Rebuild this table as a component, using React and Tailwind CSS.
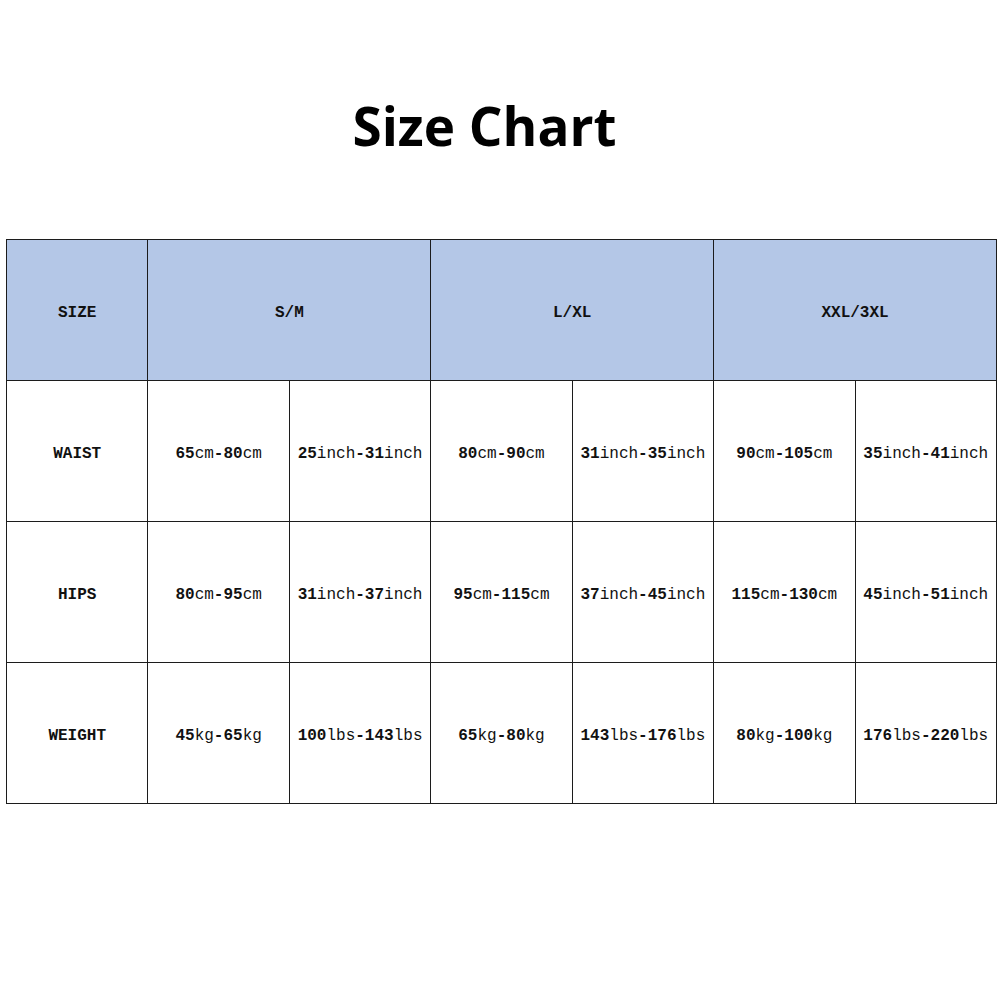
import React from "react";

const mono = { fontFamily: '"Liberation Mono", "DejaVu Sans Mono", monospace' };

function Val({ text }) {
  const parts = text.split(/(\d+|-)/).filter(Boolean);
  return (
    <span className="whitespace-nowrap">
      {parts.map((p, i) =>
        /^(\d+|-)$/.test(p) ? (
          <span key={i} className="font-bold">{p}</span>
        ) : (
          <span key={i} className="font-normal">{p}</span>
        )
      )}
    </span>
  );
}

const rows = [
  ["WAIST", ["65cm-80cm", "25inch-31inch", "80cm-90cm", "31inch-35inch", "90cm-105cm", "35inch-41inch"]],
  ["HIPS", ["80cm-95cm", "31inch-37inch", "95cm-115cm", "37inch-45inch", "115cm-130cm", "45inch-51inch"]],
  ["WEIGHT", ["45kg-65kg", "100lbs-143lbs", "65kg-80kg", "143lbs-176lbs", "80kg-100kg", "176lbs-220lbs"]],
];

export default function App() {
  const cell = "border border-[#1c1c1c] h-[141px] text-center align-middle px-0 pt-[6px] pb-0";
  return (
    <div className="w-[1000px] h-[1000px] bg-white relative overflow-hidden">
      <div className="pt-[99px] h-[239px]">
        <h1
          className="text-[53px] leading-none font-bold text-black text-center pr-[31px]"
          style={{ fontFamily: '"Open Sans", sans-serif' }}
        >
          Size Chart
        </h1>
      </div>
      <table
        className="ml-[6px] w-[990px] table-fixed border-collapse text-[16px] text-[#111]"
        style={mono}
      >
        <colgroup>
          {Array.from({ length: 7 }).map((_, i) => (
            <col key={i} className="w-[141.43px]" />
          ))}
        </colgroup>
        <tbody>
          <tr className="bg-[#b4c7e7]">
            <td className={cell + " font-bold"}>SIZE</td>
            <td className={cell + " font-bold"} colSpan={2}>S/M</td>
            <td className={cell + " font-bold"} colSpan={2}>L/XL</td>
            <td className={cell + " font-bold"} colSpan={2}>XXL/3XL</td>
          </tr>
          {rows.map(([label, vals]) => (
            <tr key={label}>
              <td className={cell + " font-bold"}>{label}</td>
              {vals.map((v, i) => (
                <td key={i} className={cell}>
                  <Val text={v} />
                </td>
              ))}
            </tr>
          ))}
        </tbody>
      </table>
    </div>
  );
}
